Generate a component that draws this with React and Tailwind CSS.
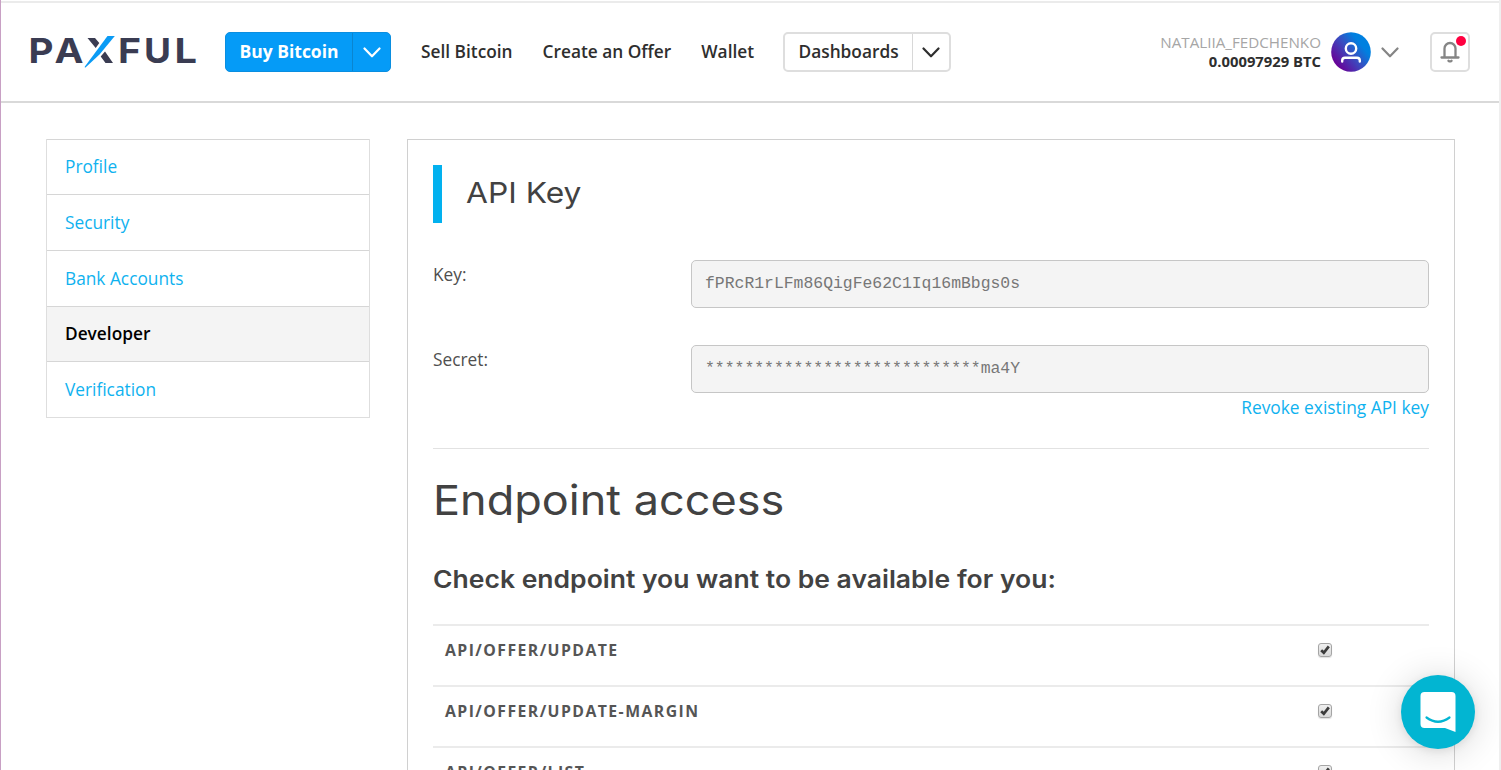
import React from "react";

const Chevron = ({ className }) => (
  <svg viewBox="0 0 18 11" className={className} fill="none" stroke="currentColor" strokeWidth="2.2" strokeLinecap="round" strokeLinejoin="round">
    <path d="M1.5 1.5 9 9.3 16.5 1.5" />
  </svg>
);

const Logo = () => (
  <svg width="172" height="60" viewBox="-2 -12 172 60" className="-ml-[2px] block shrink-0">
    <g fill="#3a3c52" fontFamily="Inter, sans-serif" fontWeight="700" fontSize="34.5">
      <text x="-1.500" y="29" textLength="25" lengthAdjust="spacingAndGlyphs">P</text>
      <text x="24.500" y="29" textLength="29" lengthAdjust="spacingAndGlyphs">A</text>
      <text x="88" y="29" textLength="23" lengthAdjust="spacingAndGlyphs">F</text>
      <text x="114" y="29" textLength="27" lengthAdjust="spacingAndGlyphs">U</text>
      <text x="144.500" y="29" textLength="22.500" lengthAdjust="spacingAndGlyphs">L</text>
    </g>
    <path d="M57.500 4h7.500l4.300 5-3.600 5z M75 17.500l8 11.500h-7.500l-4.800-6.500z" fill="#3a3c52" stroke="none" />
    <path d="M77.500 2h7.300L69.500 20.500 55.500 33.500c-.7.300-1-.2-.6-1z" fill="#0a9bf5" />
  </svg>
);

const Checkbox = () => (
  <span className="flex h-[14px] w-[14px] items-center justify-center rounded-[3px] border border-[#a5a5a5] bg-linear-to-b from-[#efefef] to-[#d9d9d9] shadow-[0_1px_1px_rgba(0,0,0,0.12)]">
    <svg width="10" height="10" viewBox="0 0 10 10" fill="none" stroke="#3c3c3c" strokeWidth="2.700">
      <path d="M1.200 5.300 3.800 7.800 8.800 1.400" />
    </svg>
  </span>
);

const menu = [
  { label: "Profile", size: "h-[55px]" },
  { label: "Security", size: "h-14 pt-[2px]" },
  { label: "Bank Accounts", size: "h-14 pt-[2px]" },
  { label: "Developer", size: "h-[55px]", active: true },
  { label: "Verification", size: "h-14 pt-[2px]" },
];

const endpoints = ["API/OFFER/UPDATE", "API/OFFER/UPDATE-MARGIN", "API/OFFER/LIST"];

const Field = ({ label, value, children, className }) => (
  <div className={`flex ${className}`}>
    <div className="w-[258px] shrink-0 pt-[1.500px] text-[17.300px] leading-[26px] text-[#4f4f4f]">{label}</div>
    <div className="flex-1">
      <div className="flex h-12 items-center rounded-[5px] border-[1.500px] border-[#c6c6c6] bg-[#f4f4f4] px-[13px] font-['Liberation_Mono',monospace] text-[16.420px] text-[#777]">
        {value}
      </div>
      {children}
    </div>
  </div>
);

export default function App() {
  return (
    <div className="relative flex h-[770px] w-[1501px] flex-col overflow-hidden border-r-2 border-l border-r-[#efefef] border-l-[#c8a0c4] bg-white font-['Open_Sans',sans-serif]">
      <header className="mt-px flex h-[102px] shrink-0 items-center border-t-2 border-b-2 border-t-[#ebebeb] border-b-[#d9d9d9] pr-[29px] pl-[29px] text-[17.300px] font-semibold text-[#2e2e2e]">
        <Logo />
        <div className="ml-[25px] flex h-10 w-[166px] shrink-0 rounded-[5px] border border-[#0a8ee0] bg-[#059bf7] font-bold text-white">
          <div className="flex flex-1 items-center justify-center pb-[2px] text-[17.500px]">Buy Bitcoin</div>
          <div className="flex w-[38px] items-center justify-center border-l border-[#0a85d0]">
            <Chevron className="h-[11px] w-[18px]" />
          </div>
        </div>
        <nav className="ml-[30px] flex shrink-0 gap-[30px] whitespace-nowrap">
          <a>Sell Bitcoin</a>
          <a>Create an Offer</a>
          <a>Wallet</a>
        </nav>
        <div className="ml-[29px] flex h-10 w-[168px] shrink-0 rounded-[5px] border-2 border-[#dedede]">
          <div className="flex flex-1 items-center justify-center pb-px">Dashboards</div>
          <div className="flex w-[37px] items-center justify-center border-l border-[#d8d8d8]">
            <Chevron className="h-[11px] w-[18px]" />
          </div>
        </div>
        <div className="ml-auto flex items-center">
          <div className="pb-[2px] text-right text-[14.800px] leading-5">
            <div className="text-[15.200px] font-normal text-[#a6a6a6]">NATALIIA_FEDCHENKO</div>
            <div className="-mt-px font-bold">0.00097929 BTC</div>
          </div>
          <svg width="40" height="40" viewBox="0 0 40 40" className="ml-[10px]">
            <defs>
              <linearGradient id="avatar" x1="0.100" y1="0.800" x2="0.850" y2="0.200">
                <stop offset="0" stopColor="#6a0096" />
                <stop offset="0.500" stopColor="#3a4cc0" />
                <stop offset="0.850" stopColor="#0080e0" />
              </linearGradient>
            </defs>
            <circle cx="20" cy="20" r="19.800" fill="url(#avatar)" />
            <g fill="none" stroke="#fff" strokeWidth="2.400" strokeLinecap="round">
              <circle cx="20" cy="16.500" r="5.200" />
              <path d="M11.200 29.500V28.500Q11.200 25.800 14 25.800H26Q28.800 25.800 28.800 28.500V29.500" />
            </g>
          </svg>
          <Chevron className="ml-[10px] h-[11px] w-[18px] text-[#858585]" />
          <div className="relative ml-[31px] flex h-10 w-10 items-center justify-center rounded-[5px] border-2 border-[#dedede]">
            <svg width="20" height="22" viewBox="0 0 20 22" fill="none" stroke="#858585" strokeWidth="2.300" strokeLinecap="round">
              <path d="M1.500 16.500H18.500M4.500 16.500V7.500A5.500 5.500 0 0 1 15.500 7.500V16.500" />
              <path d="M8.500 19.800Q10 21 11.500 19.800" />
            </svg>
            <span className="absolute top-[2px] right-[2px] h-[10px] w-[10px] rounded-full bg-[#ff0040]" />
          </div>
        </div>
      </header>

      <div className="flex flex-1 items-start pt-9 pl-[45px]">
        <aside className="w-[324px] shrink-0 border-x border-b border-[#dedede]">
          {menu.map((m) => (
            <div
              key={m.label}
              className={`flex items-center border-t border-[#d6d6d6] pb-px pl-[18px] text-[17.300px] ${m.size} ${m.active ? "bg-[#f4f4f4] font-semibold text-black" : "text-[#0fb2ef]"}`}
            >
              {m.label}
            </div>
          ))}
        </aside>

        <main className="ml-[37px] flex h-[660px] w-[1048px] shrink-0 flex-col border-[1.500px] border-[#d0d0d0] pt-[25px] pr-[25px] pl-[25px] text-[#424242]">
          <h2 className="flex h-[58px] shrink-0 items-center border-l-[9px] border-[#02b1ef] pb-[3px] pl-6 font-['Inter',sans-serif] text-[29px]">
            <span className="origin-left scale-x-[1.095]">API Key</span>
          </h2>
          <Field className="mt-[37px]" label="Key:" value="fPRcR1rLFm86QigFe62C1Iq16mBbgs0s" />
          <Field className="mt-[37px]" label="Secret:" value="****************************ma4Y">
            <div className="mt-[1px] mb-[1px] text-right text-[17.350px] leading-[26px] text-[#0fb2ef]">Revoke existing API key</div>
          </Field>
          <div className="mt-[27px] h-px shrink-0 bg-[#e2e2e2]" />
          <h1 className="mt-[22px] origin-left scale-x-[1.085] font-['Inter',sans-serif] text-[41.500px] leading-[58px] whitespace-nowrap">Endpoint access</h1>
          <h3 className="mt-[33px] origin-left scale-x-[1.082] font-['Inter',sans-serif] text-[24.500px] leading-[34px] font-semibold whitespace-nowrap">
            Check endpoint you want to be available for you:
          </h3>
          <div className="mt-[28px] flex flex-col">
            {endpoints.map((e) => (
              <div key={e} className="flex h-[61px] shrink-0 items-start justify-between border-t-2 border-[#ebebeb] pt-[11px] pr-[97px] pl-3">
                <span className="text-[15.800px] leading-[26px] font-bold tracking-[1.430px] text-[#555]">{e}</span>
                <span className="pt-[6px]">
                  <Checkbox />
                </span>
              </div>
            ))}
          </div>
        </main>
      </div>

      <button className="absolute top-[675px] left-[1400px] flex h-[74px] w-[74px] items-center justify-center rounded-full bg-[#02b5d2] shadow-[0_2px_8px_rgba(0,0,0,0.08),0_3px_36px_rgba(0,0,0,0.16)]">
        <svg width="36" height="40" viewBox="0 0 36 40">
          <path d="M4.500 0H31.500Q35.500 0 35.500 4V40L25 36H4.500Q.5 36 .5 32V4Q.5 0 4.500 0Z" fill="#fff" />
          <path d="M6.500 25.500Q18 34 29.500 25.500" fill="none" stroke="#02b5d2" strokeWidth="2.200" strokeLinecap="round" />
        </svg>
      </button>
    </div>
  );
}
